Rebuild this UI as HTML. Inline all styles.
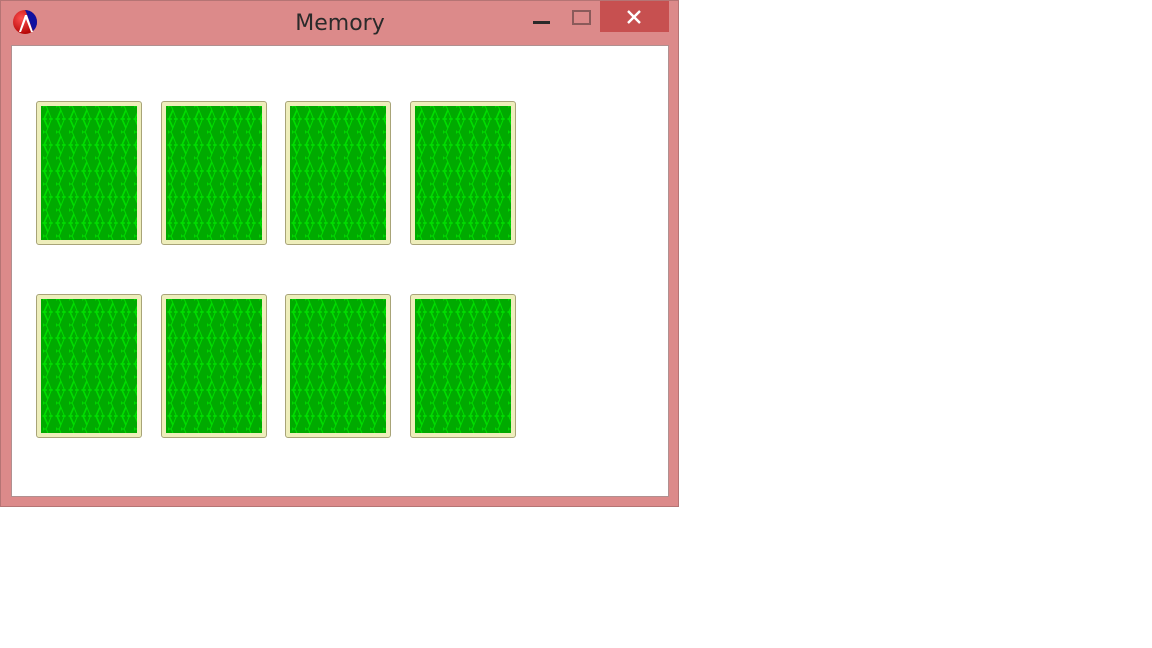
<!DOCTYPE html>
<html><head><style>
body{margin:0;width:1152px;height:648px;background:#fff;position:relative;overflow:hidden;font-family:"Liberation Sans",sans-serif}
.win{position:absolute;left:0;top:0;width:677px;height:505px;background:#dc8a8a;border:1px solid #b57474}
.title{position:absolute;left:0;width:678px;top:10px;text-align:center;color:#2a2a2a;font-family:"DejaVu Sans",sans-serif;font-size:22px}
.client{position:absolute;left:10px;top:44px;width:656px;height:450px;background:#fff;border:1px solid #b09090}
.close{position:absolute;left:599px;top:0px;width:69px;height:31px;background:#c75050}
.card{position:absolute;width:104px;height:142px;background:#eeeebb;border:1px solid #a8a478;border-radius:3px}
.card svg{position:absolute;left:4px;top:4px}
</style></head><body>
<div class="win">
<svg style="position:absolute;left:12px;top:9px" width="26" height="26" viewBox="0 0 26 26">
<defs><radialGradient id="r" cx="0.35" cy="0.35" r="0.7"><stop offset="0" stop-color="#ff5050"/><stop offset="1" stop-color="#b00000"/></radialGradient></defs>
<circle cx="12" cy="12" r="12" fill="url(#r)"/>
<path d="M12 0 A12 12 0 0 1 24 12 A12 12 0 0 1 20 21 L13 2 Z" fill="#1010a0"/>
<path d="M6 22 L12 5 L14 5 L20 22 L18 22 L13 9 L8 22 Z" fill="#fff"/>
</svg>
<div class="title">Memory</div>
<div style="position:absolute;left:532px;top:20px;width:17px;height:3px;background:#2a2a2a"></div>
<div style="position:absolute;left:571px;top:9px;width:15px;height:11px;border:2px solid #8a5a5a"></div>
<div class="close"><svg width="69" height="31"><path d="M28 10 L40 22 M40 10 L28 22" stroke="#fff" stroke-width="2.4"/></svg></div>
<div class="client"></div>
</div>
<svg width="0" height="0" style="position:absolute"><defs>
<pattern id="lam" width="13" height="26" patternUnits="userSpaceOnUse">
<rect width="13" height="26" fill="#00aa00"/>
<text x="6.5" y="13" font-size="18" fill="#00dd00" text-anchor="middle" font-family="DejaVu Serif,serif">λ</text>
<g transform="translate(0,26) scale(1,-1)"><text x="6.5" y="13" font-size="18" fill="#00dd00" text-anchor="middle" font-family="DejaVu Serif,serif">λ</text></g>
</pattern></defs></svg>
<div class="card" style="left:36px;top:101px"><svg width="96" height="134"><rect width="96" height="134" fill="url(#lam)"/></svg></div>
<div class="card" style="left:161px;top:101px"><svg width="96" height="134"><rect width="96" height="134" fill="url(#lam)"/></svg></div>
<div class="card" style="left:285px;top:101px"><svg width="96" height="134"><rect width="96" height="134" fill="url(#lam)"/></svg></div>
<div class="card" style="left:410px;top:101px"><svg width="96" height="134"><rect width="96" height="134" fill="url(#lam)"/></svg></div>
<div class="card" style="left:36px;top:294px"><svg width="96" height="134"><rect width="96" height="134" fill="url(#lam)"/></svg></div>
<div class="card" style="left:161px;top:294px"><svg width="96" height="134"><rect width="96" height="134" fill="url(#lam)"/></svg></div>
<div class="card" style="left:285px;top:294px"><svg width="96" height="134"><rect width="96" height="134" fill="url(#lam)"/></svg></div>
<div class="card" style="left:410px;top:294px"><svg width="96" height="134"><rect width="96" height="134" fill="url(#lam)"/></svg></div>
</body></html>
